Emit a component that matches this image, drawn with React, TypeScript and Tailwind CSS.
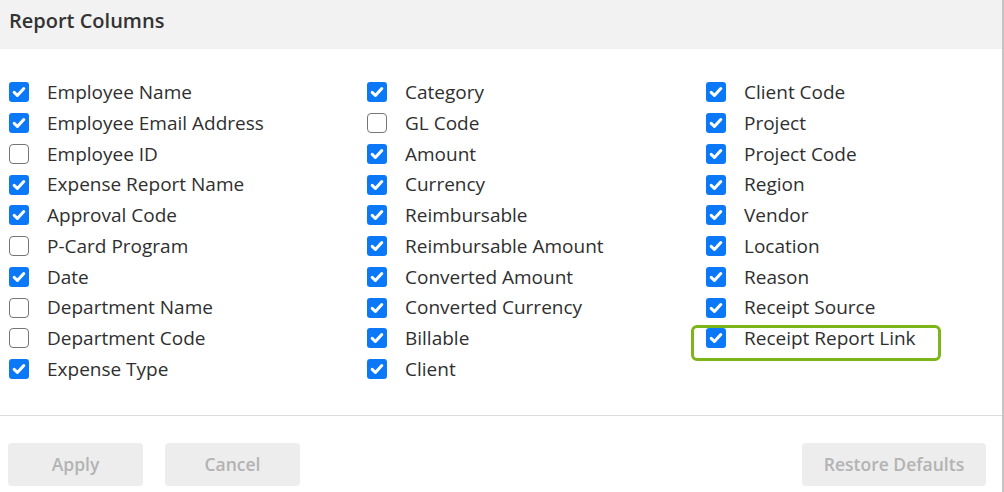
import React from "react";

type Item = { label: string; checked: boolean; highlight?: boolean };

const col1: Item[] = [
  { label: "Employee Name", checked: true },
  { label: "Employee Email Address", checked: true },
  { label: "Employee ID", checked: false },
  { label: "Expense Report Name", checked: true },
  { label: "Approval Code", checked: true },
  { label: "P-Card Program", checked: false },
  { label: "Date", checked: true },
  { label: "Department Name", checked: false },
  { label: "Department Code", checked: false },
  { label: "Expense Type", checked: true },
];
const col2: Item[] = [
  { label: "Category", checked: true },
  { label: "GL Code", checked: false },
  { label: "Amount", checked: true },
  { label: "Currency", checked: true },
  { label: "Reimbursable", checked: true },
  { label: "Reimbursable Amount", checked: true },
  { label: "Converted Amount", checked: true },
  { label: "Converted Currency", checked: true },
  { label: "Billable", checked: true },
  { label: "Client", checked: true },
];
const col3: Item[] = [
  { label: "Client Code", checked: true },
  { label: "Project", checked: true },
  { label: "Project Code", checked: true },
  { label: "Region", checked: true },
  { label: "Vendor", checked: true },
  { label: "Location", checked: true },
  { label: "Reason", checked: true },
  { label: "Receipt Source", checked: true },
  { label: "Receipt Report Link", checked: true, highlight: true },
];

function Box({ checked }: { checked: boolean }) {
  if (checked) {
    return (
      <span className="flex h-[20px] w-[20px] shrink-0 items-center justify-center rounded-[3px] bg-[#0b79f7]">
        <svg width="14" height="14" viewBox="0 0 14 14" fill="none">
          <path d="M2.2 7.4 L5.4 10.5 L11.8 3.5" stroke="white" strokeWidth="3" strokeLinecap="round" strokeLinejoin="round" />
        </svg>
      </span>
    );
  }
  return <span className="h-[20px] w-[20px] shrink-0 rounded-[4px] border-[1.5px] border-[#767676] bg-white" />;
}

function Row({ item }: { item: Item }) {
  return (
    <div className="relative flex h-[30.75px] items-center gap-[18px]">
      <Box checked={item.checked} />
      <span className="whitespace-nowrap text-[19px] text-[#2f2f2f]">{item.label}</span>
      {item.highlight && (
        <div className="pointer-events-none absolute left-[-15px] top-[1.5px] h-[36px] w-[250px] rounded-[6px] border-[3px] border-[#7cb518]" />
      )}
    </div>
  );
}

function Btn({ label, w }: { label: string; w: string }) {
  return (
    <button className={`flex h-[43px] ${w} items-center justify-center rounded-[4px] bg-[#ededed] text-[17.5px] font-semibold text-[#b3b3b3]`}>
      {label}
    </button>
  );
}

export default function App() {
  return (
    <div className="h-[492px] w-[1004px] overflow-hidden bg-white" style={{ fontFamily: '"Open Sans", "Noto Sans", sans-serif' }}>
      <div className="h-full w-[1004px] border-r-2 border-[#c4c4c4]">
        <div className="h-[49px] bg-[#f2f2f2] pl-[9px] pt-[7px]">
          <h1 className="text-[20px] leading-[28px] font-semibold text-[#333333]">Report Columns</h1>
        </div>
        <div className="grid grid-cols-[358px_339px_1fr] pb-[30.6px] pl-[9px] pt-[28px]">
          <div className="flex flex-col">{col1.map((i) => <Row key={i.label} item={i} />)}</div>
          <div className="flex flex-col">{col2.map((i) => <Row key={i.label} item={i} />)}</div>
          <div className="flex flex-col">{col3.map((i) => <Row key={i.label} item={i} />)}</div>
        </div>
        <div className="h-px bg-[#dcdcdc]" />
        <div className="flex items-center justify-between pl-[8px] pr-[16px] pt-[27px]">
          <div className="flex gap-[22px]">
            <Btn label="Apply" w="w-[135px]" />
            <Btn label="Cancel" w="w-[135px]" />
          </div>
          <Btn label="Restore Defaults" w="w-[184px]" />
        </div>
      </div>
    </div>
  );
}
